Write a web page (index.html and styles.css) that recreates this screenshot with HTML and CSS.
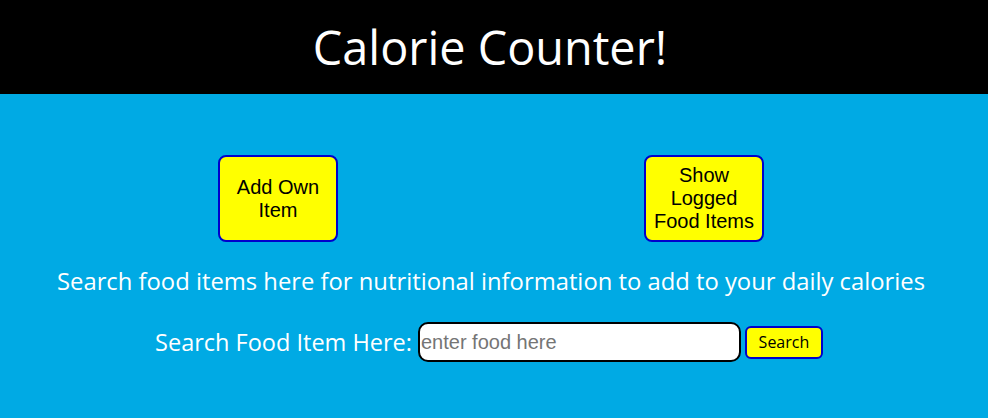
FILE: index.html
```html
<!DOCTYPE html>
<html>
<head>
<meta charset="utf-8">
<title>Calorie Counter</title>
<link rel="stylesheet" href="styles.css">
</head>
<body>
<header class="header">
  <h1 class="title">Calorie Counter!</h1>
</header>
<main class="main">
  <div class="actions">
    <button class="big-btn">Add Own Item</button>
    <button class="big-btn">Show Logged Food Items</button>
  </div>
  <p class="desc">Search food items here for nutritional information to add to your daily calories</p>
  <form class="search">
    <label class="search-label" for="food">Search Food Item Here:</label>
    <input class="search-input" id="food" type="text" placeholder="enter food here">
    <button class="search-btn" type="button">Search</button>
  </form>
</main>
</body>
</html>
```
FILE: styles.css
```css
html, body {
  margin: 0;
  padding: 0;
  height: 100%;
}
body {
  background: #00aae4;
  font-family: "Open Sans", sans-serif;
  color: #fff;
}
.header {
  background: #000;
  height: 94px;
  display: flex;
  align-items: center;
  justify-content: center;
}
.title {
  margin: 0;
  font-size: 46.8px;
  font-weight: 500;
  color: #fff;
  padding-right: 8px;
}
.main {
  display: flex;
  flex-direction: column;
  align-items: center;
}
.actions {
  display: flex;
  gap: 306px;
  margin-top: 61px;
  padding-right: 6px;
}
.big-btn {
  width: 120px;
  height: 87px;
  background: #ffff00;
  border: 2px solid #0000cc;
  border-radius: 8px;
  font-family: "Liberation Sans", Arial, sans-serif;
  font-size: 20px;
  line-height: 23px;
  color: #000;
  padding: 0 4px;
}
.desc {
  margin: 23px 0 0;
  padding-right: 6px;
  font-size: 23.8px;
  line-height: 32px;
}
.search {
  display: flex;
  align-items: center;
  margin-top: 25px;
  padding-right: 10px;
}
.search-label {
  font-size: 23.5px;
  margin-right: 6px;
}
.search-input {
  box-sizing: border-box;
  width: 323px;
  height: 40px;
  border: 2px solid #000;
  border-radius: 10px;
  padding: 0 0 0 1px;
  font-family: "Liberation Sans", Arial, sans-serif;
  font-size: 20px;
  color: #333;
}
.search-input::placeholder {
  color: #757575;
}
.search-btn {
  box-sizing: border-box;
  margin-left: 4px;
  width: 78px;
  height: 33px;
  background: #ffff00;
  border: 2px solid #0000cc;
  border-radius: 6px;
  font-family: "Open Sans", sans-serif;
  font-size: 16px;
  color: #000;
  padding: 0;
}
```
